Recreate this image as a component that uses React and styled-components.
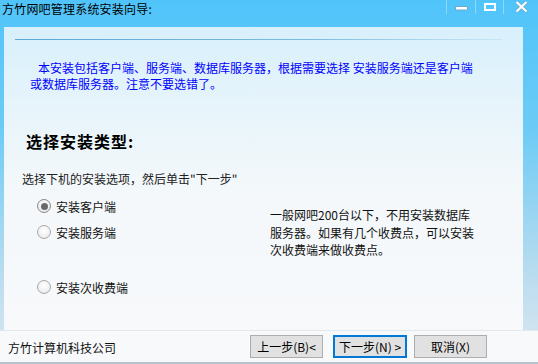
import React from "react";
import styled, { createGlobalStyle } from "styled-components";

const GlobalStyle = createGlobalStyle`
  html, body {
    margin: 0;
    padding: 0;
    background: #fff;
  }
  body {
    font-family: "Noto Sans CJK SC", "Noto Sans", sans-serif;
    font-size: 12px;
  }
`;

const Window = styled.div`
  width: 538px;
  height: 364px;
  display: flex;
  flex-direction: column;
  overflow: hidden;
  background: linear-gradient(180deg, #50c4fa 0%, #6ccbf6 35%, #b9dcef 75%, #dde8f0 100%);
`;

const TitleBar = styled.div`
  height: 27px;
  display: flex;
  align-items: flex-start;
  justify-content: space-between;
  flex-shrink: 0;
`;

const Title = styled.div`
  padding: 1px 0 0 2px;
  font-size: 12px;
  line-height: 16px;
  color: #000;
  letter-spacing: 0.2px;
`;

const Controls = styled.div`
  display: flex;
  height: 14px;
`;

const ControlButton = styled.div`
  width: ${(p) => p.w}px;
  height: 14px;
  box-sizing: border-box;
  padding-left: ${(p) => p.pad}px;
  border-left: 1px solid rgba(255, 255, 255, 0.35);
  display: flex;
  align-items: flex-start;
  svg {
    display: block;
    flex-shrink: 0;
  }
`;

const Body = styled.div`
  height: 303px;
  display: flex;
  flex-shrink: 0;
`;

const SideStrip = styled.div`
  width: ${(p) => p.w}px;
  flex-shrink: 0;
`;

const Panel = styled.div`
  flex: 1;
  background: linear-gradient(180deg, #d8f0fc 0%, #e6f4fb 25%, #f4f8fa 55%, #f7f9fb 100%);
  padding: 12px 0 0 0;
  display: flex;
  flex-direction: column;
`;

const Rule = styled.div`
  margin-left: 11px;
  width: 487px;
  height: 1px;
  background: linear-gradient(90deg, #5aa9d8 0%, #7bbbe0 60%, #c9e6f5 100%);
`;

const Notice = styled.p`
  margin: 20px 0 0 26px;
  font-size: 12px;
  line-height: 16px;
  color: #0000ff;
  text-indent: 8px;
  white-space: nowrap;
`;

const Heading = styled.h2`
  margin: 39px 0 0 22px;
  font-size: 16px;
  line-height: 20px;
  font-weight: bold;
  color: #000;
  letter-spacing: 1px;
`;

const Hint = styled.div`
  margin: 20px 0 0 18px;
  font-size: 12px;
  line-height: 16px;
  color: #222;
`;

const Choices = styled.div`
  margin: 11px 0 0 33px;
  display: grid;
  grid-template-columns: 233px 210px;
`;

const OptionList = styled.div`
  display: flex;
  flex-direction: column;
  gap: 10px;
`;

const Option = styled.label`
  display: flex;
  align-items: center;
  gap: 5px;
  height: 16px;
  margin-top: ${(p) => p.offset || 0}px;
  font-size: 12px;
  color: #111;
`;

const Radio = styled.span`
  width: 14px;
  height: 14px;
  border-radius: 50%;
  box-sizing: border-box;
  border: 1px solid ${(p) => (p.checked ? "#8a8a8a" : "#a9a9a9")};
  background: radial-gradient(circle at 50% 40%, #ffffff 0%, #f0f0f0 60%, #dcdcdc 100%);
  display: flex;
  align-items: center;
  justify-content: center;
  &::after {
    content: "";
    width: 7px;
    height: 7px;
    border-radius: 50%;
    background: ${(p) => (p.checked ? "#6a6a6a" : "transparent")};
  }
`;

const Description = styled.div`
  margin-top: 8px;
  font-size: 12px;
  line-height: 17.5px;
  color: #111;
`;

const Footer = styled.div`
  height: 34px;
  box-sizing: border-box;
  flex-shrink: 0;
  background: #f7f9fb;
  border-top: 1px solid #e1e8ee;
  border-bottom: 2px solid #b5c3cf;
  display: flex;
  align-items: center;
  padding: 0 51px 0 8px;
`;

const Company = styled.div`
  flex: 1;
  font-size: 12px;
  color: #111;
  padding-top: 2px;
`;

const Button = styled.button`
  width: ${(p) => (p.primary ? 74 : 73)}px;
  height: 23px;
  margin-left: ${(p) => p.gap}px;
  box-sizing: border-box;
  padding: 0;
  background: #e1e1e1;
  border: ${(p) => (p.primary ? "2px solid #0078d7" : "1px solid #adadad")};
  font-family: "Noto Sans CJK SC", "Noto Sans", sans-serif;
  font-size: 12px;
  color: #000;
  display: flex;
  align-items: center;
  justify-content: center;
`;

const WHITE = "#ffffff";
const EDGE = "#6fa8c6";

export default function App() {
  return (
    <>
      <GlobalStyle />
      <Window>
        <TitleBar>
          <Title>方竹网吧管理系统安装向导:</Title>
          <Controls>
            <ControlButton w={29} pad={8}>
              <svg width="13" height="14" viewBox="0 0 13 14">
                <path d="M0.5 6.5 H12.5 V10 H0.5 Z" fill={WHITE} stroke={EDGE} strokeWidth="1" />
              </svg>
            </ControlButton>
            <ControlButton w={28} pad={8}>
              <svg width="12" height="14" viewBox="0 0 12 14">
                <rect x="1" y="4" width="10" height="6" fill="none" stroke={WHITE} strokeWidth="2" />
              </svg>
            </ControlButton>
            <ControlButton w={35} pad={11}>
              <svg width="13" height="14" viewBox="0 0 13 14">
                <path d="M1.5 2 L11.5 11.5 M11.5 2 L1.5 11.5" stroke={EDGE} strokeWidth="3.4" />
                <path d="M1.5 2 L11.5 11.5 M11.5 2 L1.5 11.5" stroke={WHITE} strokeWidth="2.2" />
              </svg>
            </ControlButton>
          </Controls>
        </TitleBar>
        <Body>
          <SideStrip w={4} />
          <Panel>
            <Rule />
            <Notice>
              本安装包括客户端、服务端、数据库服务器，根据需要选择 安装服务端还是客户端
              <br />
              或数据库服务器。注意不要选错了。
            </Notice>
            <Heading>选择安装类型:</Heading>
            <Hint>选择下机的安装选项，然后单击"下一步"</Hint>
            <Choices>
              <OptionList>
                <Option>
                  <Radio checked />
                  安装客户端
                </Option>
                <Option>
                  <Radio />
                  安装服务端
                </Option>
                <Option offset={29}>
                  <Radio />
                  安装次收费端
                </Option>
              </OptionList>
              <Description>
                一般网吧200台以下，不用安装数据库
                <br />
                服务器。如果有几个收费点，可以安装
                <br />
                次收费端来做收费点。
              </Description>
            </Choices>
          </Panel>
          <SideStrip w={15} />
        </Body>
        <Footer>
          <Company>方竹计算机科技公司</Company>
          <Button gap={0}>上一步(B)&lt;</Button>
          <Button primary gap={10}>下一步(N) &gt;</Button>
          <Button gap={7}>取消(X)</Button>
        </Footer>
      </Window>
    </>
  );
}
